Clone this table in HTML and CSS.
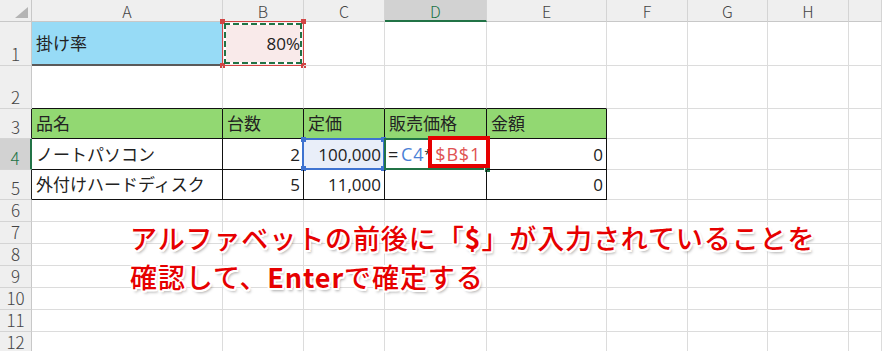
FILE: index.html
```html
<!DOCTYPE html>
<html lang="ja">
<head>
<meta charset="utf-8">
<link rel="stylesheet" href="styles.css">
</head>
<body>
<div class="sheet">
  <!-- header row -->
  <div class="c corner"><span class="tri"></span></div>
  <div class="c ch">A</div>
  <div class="c ch">B</div>
  <div class="c ch">C</div>
  <div class="c ch ch-sel">D</div>
  <div class="c ch">E</div>
  <div class="c ch">F</div>
  <div class="c ch">G</div>
  <div class="c ch">H</div>
  <div class="c ch"></div>

  <!-- row 1 -->
  <div class="c rh">1</div>
  <div class="c a1">掛け率</div>
  <div class="c b1 num">80%
    <div class="ref-red"><i class="h tl"></i><i class="h tr"></i><i class="h bl"></i><i class="h br"></i></div>
    <div class="ants"></div>
  </div>
  <div class="c"></div><div class="c"></div><div class="c"></div><div class="c"></div><div class="c"></div><div class="c"></div><div class="c"></div>

  <!-- row 2 -->
  <div class="c rh">2</div>
  <div class="c tb-top"></div><div class="c tb-top"></div><div class="c tb-top"></div><div class="c tb-top"></div><div class="c tb-top"></div>
  <div class="c"></div><div class="c"></div><div class="c"></div><div class="c"></div>

  <!-- row 3 -->
  <div class="c rh rh-tb">3</div>
  <div class="c tb hd">品名</div>
  <div class="c tb hd">台数</div>
  <div class="c tb hd">定価</div>
  <div class="c tb hd">販売価格</div>
  <div class="c tb hd">金額</div>
  <div class="c"></div><div class="c"></div><div class="c"></div><div class="c"></div>

  <!-- row 4 -->
  <div class="c rh rh-sel">4</div>
  <div class="c tb">ノートパソコン</div>
  <div class="c tb num">2</div>
  <div class="c tb num c4">100,000
    <div class="ref-blue"><i class="h tl"></i><i class="h tr"></i><i class="h bl"></i><i class="h br"></i></div>
  </div>
  <div class="c tb d4"><span class="f-eq">=</span><span class="f-c4">C4</span><span class="f-star">*</span><span class="f-b1">$B$1</span>
    <div class="active"><i class="fill"></i></div>
    <div class="mark"></div>
  </div>
  <div class="c tb num">0</div>
  <div class="c"></div><div class="c"></div><div class="c"></div><div class="c"></div>

  <!-- row 5 -->
  <div class="c rh rh-tb">5</div>
  <div class="c tb">外付けハードディスク</div>
  <div class="c tb num">5</div>
  <div class="c tb num">11,000</div>
  <div class="c tb"></div>
  <div class="c tb num">0</div>
  <div class="c"></div><div class="c"></div><div class="c"></div><div class="c"></div>

  <!-- rows 6-12 -->
  <div class="c rh">6</div><div class="c"></div><div class="c"></div><div class="c"></div><div class="c"></div><div class="c"></div><div class="c"></div><div class="c"></div><div class="c"></div><div class="c"></div>
  <div class="c rh">7</div><div class="c"></div><div class="c"></div><div class="c"></div><div class="c"></div><div class="c"></div><div class="c"></div><div class="c"></div><div class="c"></div><div class="c"></div>
  <div class="c rh">8</div><div class="c"></div><div class="c"></div><div class="c"></div><div class="c"></div><div class="c"></div><div class="c"></div><div class="c"></div><div class="c"></div><div class="c"></div>
  <div class="c rh">9</div><div class="c"></div><div class="c"></div><div class="c"></div><div class="c"></div><div class="c"></div><div class="c"></div><div class="c"></div><div class="c"></div><div class="c"></div>
  <div class="c rh">10</div><div class="c"></div><div class="c"></div><div class="c"></div><div class="c"></div><div class="c"></div><div class="c"></div><div class="c"></div><div class="c"></div><div class="c"></div>
  <div class="c rh">11</div><div class="c"></div><div class="c"></div><div class="c"></div><div class="c"></div><div class="c"></div><div class="c"></div><div class="c"></div><div class="c"></div><div class="c"></div>
  <div class="c rh">12</div><div class="c"></div><div class="c"></div><div class="c"></div><div class="c"></div><div class="c"></div><div class="c"></div><div class="c"></div><div class="c"></div><div class="c"></div>

  <div class="note">
    <p>アルファベットの前後に「<b>$</b>」が入力されていることを</p>
    <p>確認して、<b>Enter</b>で確定する</p>
  </div>
</div>
</body>
</html>
```

FILE: styles.css
```css
html, body {
  margin: 0;
  padding: 0;
  background: #fff;
  overflow: hidden;
}

.sheet {
  position: relative;
  display: grid;
  grid-template-columns: 32px 191px 81px 81px 102px 120px 81px 80px 81px 1fr;
  grid-template-rows: 22px 44px 43px 30px 31px 30px repeat(7, 22px);
  width: 882px;
  height: 351px;
  overflow: hidden;
  font-family: "Open Sans", "Noto Sans CJK JP", sans-serif;
  font-size: 17px;
  color: #222;
}

.c {
  position: relative;
  box-sizing: border-box;
  border-right: 1px solid #dcdcdc;
  border-bottom: 1px solid #dcdcdc;
  display: flex;
  align-items: center;
  padding: 0 4px;
  white-space: nowrap;
  line-height: 1;
}

.num { justify-content: flex-end; padding-right: 3px; }

/* headers */
.corner {
  background: #efefef;
  border-right: 1px solid #c8c8c8;
  border-bottom: 1px solid #c8c8c8;
}
.tri {
  position: absolute;
  right: 3px;
  bottom: 3px;
  width: 0;
  height: 0;
  border-left: 13px solid transparent;
  border-bottom: 11px solid #b4b4b4;
}
.ch {
  background: #efefef;
  border-right: 1px solid #d4d4d4;
  border-bottom: 1px solid #c8c8c8;
  justify-content: center;
  font-family: "Noto Sans CJK JP", sans-serif;
  font-weight: 300;
  font-size: 16px;
  color: #444;
  padding-top: 1px;
}
.ch-sel {
  background: #d2d2d2;
  color: #217346;
  border-bottom: 2px solid #217346;
  padding-top: 2px;
}
.rh {
  background: #efefef;
  border-right: 1px solid #c8c8c8;
  border-bottom: 1px solid #d4d4d4;
  justify-content: center;
  align-items: flex-end;
  padding: 0 0 3px;
  font-family: "Noto Sans CJK JP", sans-serif;
  font-weight: 300;
  font-size: 17px;
  line-height: 16px;
  color: #444;
}
.rh-tb { border-right-color: #222; }
.rh-sel {
  background: #d2d2d2;
  color: #217346;
  border-right: 2px solid #217346;
}

/* row 1 */
.a1 {
  background: #97dbf6;
  border-bottom: 2px solid #5a5a5a;
}
.b1 { background: #f9eaea; }
.ref-red {
  position: absolute;
  left: -1px; top: -1px; right: -1px; bottom: -1px;
  border: 1px solid #d24545;
}
.ref-red .h { background: #d24545; }
.h {
  position: absolute;
  width: 5px;
  height: 5px;
}
.tl { left: -3px; top: -3px; }
.tr { right: -3px; top: -3px; }
.bl { left: -3px; bottom: -3px; }
.br { right: -3px; bottom: -3px; }
.ants {
  position: absolute;
  left: 1px; top: 1px; right: 1px; bottom: 1px;
  background:
    repeating-linear-gradient(90deg, #217346 0 6px, #fff 6px 9px) left top / 100% 2px no-repeat,
    repeating-linear-gradient(90deg, #217346 0 6px, #fff 6px 9px) left bottom / 100% 2px no-repeat,
    repeating-linear-gradient(180deg, #217346 0 6px, #fff 6px 9px) left top / 2px 100% no-repeat,
    repeating-linear-gradient(180deg, #217346 0 6px, #fff 6px 9px) right top / 2px 100% no-repeat;
}

/* table */
.tb-top { border-bottom-color: #111; }
.tb {
  border-right-color: #111;
  border-bottom-color: #111;
}
.hd { background: #92d872; }

.c4 { background: #e9eef9; }
.ref-blue {
  position: absolute;
  left: -2px; top: -1px; right: -1px; bottom: -1px;
  border: 2px solid #3f73d0;
}
.ref-blue .h { background: #3f73d0; }

.d4 { padding-left: 3px; font-size: 18px; letter-spacing: 0.8px; }
.f-eq { color: #222; margin-right: 2px; }
.f-c4 { color: #4a7fd6; }
.f-star { color: #222; font-size: 13px; margin-right: 3px; }
.f-b1 { color: #e05252; }
.active {
  position: absolute;
  left: -1px; top: -1px; right: -2px; bottom: -1px;
  border: 2px solid #217346;
}
.fill {
  position: absolute;
  right: -5px;
  bottom: -5px;
  width: 5px;
  height: 5px;
  background: #217346;
  border: 1px solid #fff;
}
.mark {
  position: absolute;
  left: 43px;
  top: -3px;
  width: 54px;
  height: 24px;
  border: 4px solid #e60000;
}

/* annotation */
.note {
  position: absolute;
  left: 130px;
  top: 218px;
  color: #e60000;
  font-family: "Noto Sans CJK JP", sans-serif;
  font-size: 27px;
  font-weight: 500;
  letter-spacing: 0.9px;
  line-height: 39px;
  text-shadow:
    2px 0 0 #fff, -2px 0 0 #fff, 0 2px 0 #fff, 0 -2px 0 #fff,
    1.5px 1.5px 0 #fff, -1.5px 1.5px 0 #fff, 1.5px -1.5px 0 #fff, -1.5px -1.5px 0 #fff,
    2px 3px 3px rgba(0, 0, 0, 0.35);
}
.note p { margin: 0; white-space: nowrap; }
.note b { font-weight: 700; }
```
